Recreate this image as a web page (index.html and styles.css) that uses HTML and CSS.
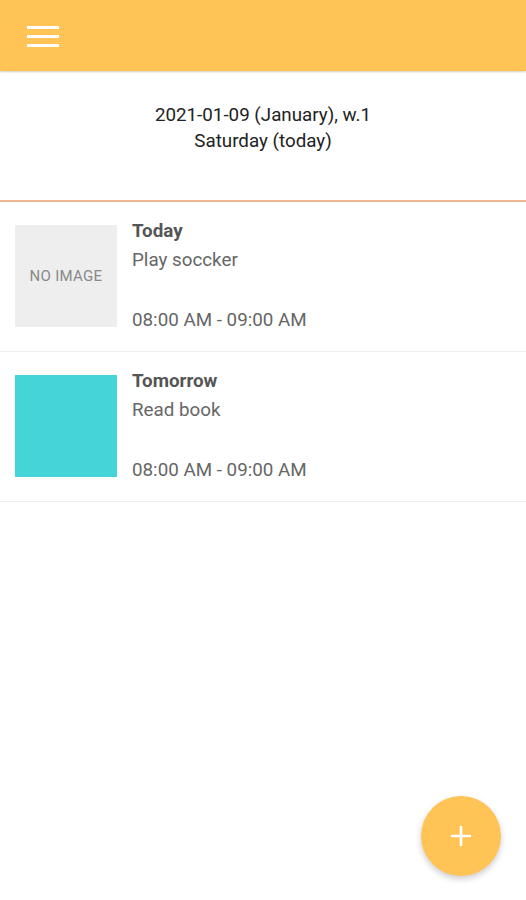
FILE: index.html
```html
<!DOCTYPE html>
<html lang="en">
<head>
    <meta charset="UTF-8">
    <title>Schedule</title>
    <link rel="stylesheet" href="styles.css">
</head>
<body>
    <div class="toolbar">
        <button class="menu-btn">
            <svg width="34" height="24" viewBox="0 0 34 24">
                <rect x="1" y="1" width="32" height="3" fill="#fff"/>
                <rect x="1" y="10" width="32" height="3" fill="#fff"/>
                <rect x="1" y="19" width="32" height="3" fill="#fff"/>
            </svg>
        </button>
    </div>
    <div class="date-box">
        <div>2021-01-09 (January), w.1</div>
        <div>Saturday (today)</div>
    </div>
    <div class="list">
        <div class="item">
            <div class="thumb no-image">NO IMAGE</div>
            <div class="info">
                <div class="title">Today</div>
                <div class="desc">Play soccker</div>
                <div class="time">08:00 AM - 09:00 AM</div>
            </div>
        </div>
        <div class="item">
            <div class="thumb teal"></div>
            <div class="info">
                <div class="title">Tomorrow</div>
                <div class="desc">Read book</div>
                <div class="time">08:00 AM - 09:00 AM</div>
            </div>
        </div>
    </div>
    <button class="fab">
        <svg width="24" height="24" viewBox="0 0 24 24">
            <rect x="10.75" y="2" width="2.5" height="20" fill="#fff"/>
            <rect x="2" y="10.75" width="20" height="2.5" fill="#fff"/>
        </svg>
    </button>
</body>
</html>
```

FILE: styles.css
```css
body {
    margin: 0;
    font-family: Roboto, "Liberation Sans", sans-serif;
    background: #fff;
}
.toolbar {
    height: 71px;
    background: #ffc455;
    box-shadow: 0 1px 2px rgba(150, 100, 40, 0.35);
    display: flex;
    align-items: center;
    position: relative;
}
.menu-btn {
    background: none;
    border: none;
    padding: 0;
    margin-left: 26px;
    margin-top: 2px;
    display: flex;
}
.date-box {
    height: 131px;
    padding-top: 31px;
    box-sizing: border-box;
    display: flex;
    flex-direction: column;
    align-items: center;
    font-size: 18.8px;
    line-height: 26px;
    color: #222;
    border-bottom: 2px solid #f0b890;
}
.item {
    display: flex;
    padding: 23px 15px 24px;
    border-bottom: 1px solid #eee;
}
.thumb {
    width: 102px;
    height: 102px;
    flex-shrink: 0;
}
.no-image {
    background: #eee;
    color: #888;
    font-size: 15px;
    letter-spacing: 0.3px;
    display: flex;
    align-items: center;
    justify-content: center;
}
.teal {
    background: #45d4d8;
}
.info {
    margin: -5px 0 -4px 15px;
    display: flex;
    flex-direction: column;
    font-size: 18.8px;
    line-height: 22px;
    color: #666;
}
.title {
    font-weight: bold;
    color: #555;
}
.desc {
    margin-top: 7px;
}
.time {
    margin-top: auto;
}
.fab {
    position: fixed;
    left: 421px;
    top: 796px;
    width: 80px;
    height: 80px;
    border-radius: 50%;
    border: none;
    background: #ffc455;
    box-shadow: 0 3px 6px rgba(0, 0, 0, 0.2);
    display: flex;
    align-items: center;
    justify-content: center;
    padding: 0;
}
```
